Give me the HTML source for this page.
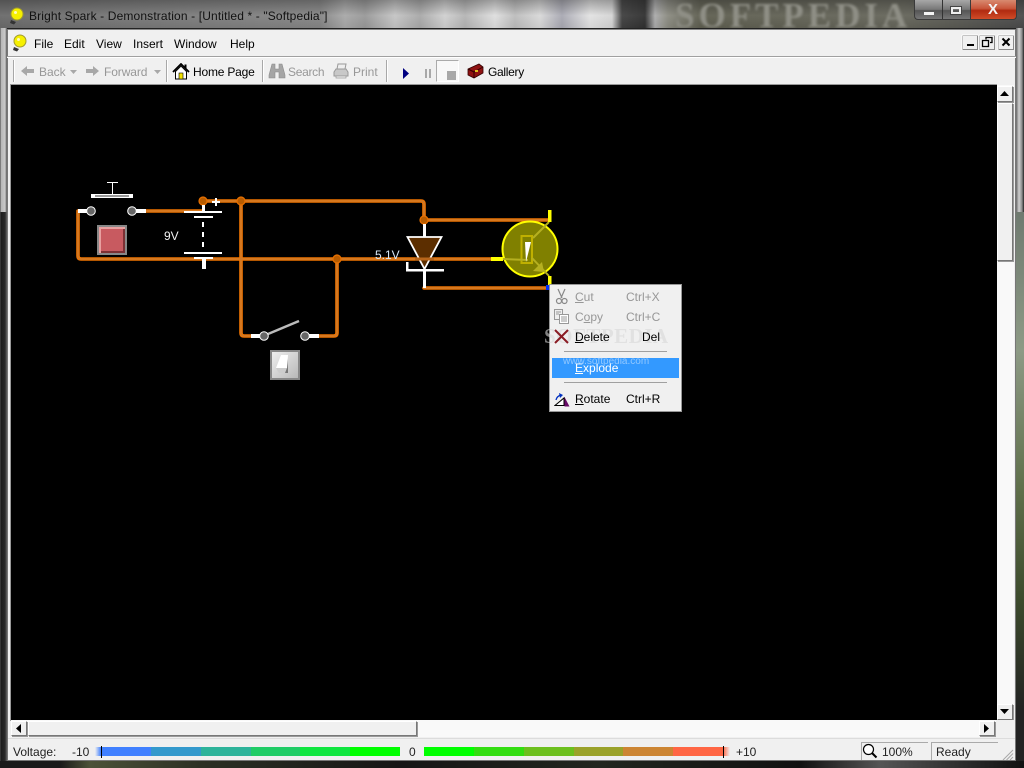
<!DOCTYPE html>
<html>
<head>
<meta charset="utf-8">
<title>Bright Spark</title>
<style>
html,body{margin:0;padding:0;width:1024px;height:768px;overflow:hidden;background:#222}
body{position:relative;font-family:"Liberation Sans",sans-serif;font-size:12px;color:#000}
.a{position:absolute}
.t{position:absolute;white-space:nowrap;line-height:14px;height:14px}
.d{color:#979797}
.btn{position:absolute;box-sizing:border-box;background:#f0f0f0;border:1px solid;border-color:#fff #777 #777 #fff;box-shadow:1px 1px 0 #999}
.sep{position:absolute;width:1px;background:#a8a8a8;border-right:1px solid #fff}
u{text-decoration:underline}
</style>
</head>
<body>
<!-- glass frame -->
<div class="a" style="left:0;top:0;width:1024px;height:28px;background:linear-gradient(90deg,#6a6a6a 0,#767676 120px,#858585 320px,#a8a8a8 345px,#989898 365px,#c4c4c4 395px,#a8a8a8 420px,#d0d0d0 445px,#b4b4b4 465px,#dedede 495px,#bcbcbc 515px,#d8d8d8 540px,#a8a8b2 562px,#e2e2e2 590px,#d4d4d4 612px,#404040 622px,#303030 645px,#ababab 655px,#8a8a80 668px,#5e5e50 700px,#65655a 900px,#4a4a4a 1024px)"></div>
<div class="a" style="left:0;top:0;width:1024px;height:28px;background:linear-gradient(180deg,rgba(40,40,40,.35),rgba(255,255,255,.05) 55%,rgba(0,0,0,.05))"></div>
<div class="a" style="left:0;top:0;width:1024px;height:28px;overflow:hidden"><div class="a" style="left:675px;top:-4px;font:bold 35px 'Liberation Serif',serif;color:#8f8f86;letter-spacing:4px;filter:blur(1.200px);white-space:nowrap">SOFTPEDIA</div></div>
<div class="a" style="left:0;top:28px;width:7px;height:184px;background:linear-gradient(90deg,#444 0,#b5b5b5 1px,#c8c8c8 5px,#555 7px)"></div>
<div class="a" style="left:0;top:212px;width:7px;height:556px;background:linear-gradient(90deg,#555 0,#1c1c1c 1px,#2a2a2a 5px,#666 7px)"></div>
<div class="a" style="left:1016px;top:28px;width:8px;height:184px;background:linear-gradient(90deg,#666,#d0d0d0 3px,#8a8a8a 6px,#222 8px)"></div>
<div class="a" style="left:1016px;top:212px;width:8px;height:556px;background:linear-gradient(180deg,#6f7a70 0,#8d9a85 25%,#5f6f4a 50%,#3c4a2c 70%,#222 90%)"></div>
<div class="a" style="left:0;top:761px;width:1024px;height:7px;background:linear-gradient(90deg,#1a1a1a 0,#1a1a1a 60px,#4c5238 90px,#2c3024 200px,#161616 400px,#22261f 600px,#111 800px,#555 880px,#333 950px,#111 1024px)"></div>

<!-- title -->
<svg class="a" style="left:8px;top:5px" width="20" height="20" viewBox="0 0 20 20"><circle cx="9" cy="9" r="6" fill="#f6f000" stroke="#a09a30"/><circle cx="7.500" cy="7.500" r="1.500" fill="#fffbc0"/><path d="M3 15l5 2-2 2.500-4-1.500z" fill="#333"/></svg>
<div class="t" style="left:29px;top:9px;color:#111;letter-spacing:.14px">Bright Spark - Demonstration - [Untitled * - "Softpedia"]</div>
<!-- caption buttons -->
<div class="a" style="left:914px;top:0;width:57px;height:20px;box-sizing:border-box;border:1px solid #3a3a3a;border-top:0;border-right:0;border-radius:0 0 0 4px;background:linear-gradient(180deg,#a8a8a8,#777 50%,#555 55%,#777)"></div>
<div class="a" style="left:942px;top:0;width:1px;height:19px;background:#333"></div>
<div class="a" style="left:970px;top:0;width:47px;height:20px;box-sizing:border-box;border:1px solid #3a3a3a;border-top:0;border-radius:0 0 4px 0;background:linear-gradient(180deg,#d88a70,#c8553a 45%,#b02a10 55%,#d04c28)"></div>
<div class="a" style="left:924px;top:12px;width:10px;height:3px;background:#f4f4f4"></div>
<div class="a" style="left:951px;top:7px;width:10px;height:7px;box-sizing:border-box;border:2px solid #eee;outline:1px solid #444"></div>
<div class="a" style="left:988px;top:1px;font:bold 15px 'Liberation Sans',sans-serif;color:#f4f4f4;line-height:18px">X</div>

<!-- client -->
<div class="a" style="left:7px;top:29px;width:1009px;height:732px;background:#f0f0f0;border-top:1px solid #888;box-sizing:border-box"></div>
<div class="a" style="left:7px;top:29px;width:1px;height:732px;background:#777"></div>
<div class="a" style="left:1015px;top:29px;width:1px;height:732px;background:#777"></div>
<div class="a" style="left:7px;top:56px;width:1009px;height:1px;background:#a0a0a0"></div>
<div class="a" style="left:7px;top:57px;width:1009px;height:1px;background:#fff"></div>

<!-- menu -->
<svg class="a" style="left:11px;top:34px" width="20" height="20" viewBox="0 0 20 20"><circle cx="9" cy="7" r="6" fill="#f6f000" stroke="#a09a30"/><circle cx="7.500" cy="5.500" r="1.500" fill="#fffbc0"/><path d="M3 13l5 2-2 2.500-4-1.500z" fill="#333"/></svg>
<div class="t" style="left:34px;top:37px">File</div>
<div class="t" style="left:64px;top:37px">Edit</div>
<div class="t" style="left:96px;top:37px">View</div>
<div class="t" style="left:133px;top:37px">Insert</div>
<div class="t" style="left:174px;top:37px">Window</div>
<div class="t" style="left:230px;top:37px">Help</div>
<!-- mdi buttons -->
<svg class="a" style="left:961px;top:34px" width="54" height="17" viewBox="0 0 54 17">
<rect x="1.500" y="1.500" width="15" height="14" fill="#f0f0f0" stroke="#888"/><path d="M1 1h16M1 1v15" stroke="#fff"/>
<rect x="6" y="10" width="7" height="2" fill="#000"/>
<rect x="18.500" y="1.500" width="15" height="14" fill="#f0f0f0" stroke="#888"/><path d="M18 1h16M18 1v15" stroke="#fff"/>
<path d="M25 5.500V3.500h6v5h-2M21.500 6.500h6v6h-6z" fill="none" stroke="#000" stroke-width="1.300"/>
<rect x="37.500" y="1.500" width="15" height="14" fill="#f0f0f0" stroke="#888"/><path d="M37 1h16M37 1v15" stroke="#fff"/>
<path d="M41.500 4.500l7 7M48.500 4.500l-7 7" stroke="#000" stroke-width="2"/>
</svg>

<!-- toolbar -->
<div class="sep" style="left:13px;top:60px;height:22px"></div>
<div class="sep" style="left:166px;top:60px;height:22px"></div>
<div class="sep" style="left:262px;top:60px;height:22px"></div>
<div class="sep" style="left:386px;top:60px;height:22px"></div>
<svg class="a" style="left:20px;top:64px" width="16" height="14"><path d="M1 7l6-5v3h7v4H7v3z" fill="#a8a8a8"/></svg>
<div class="t d" style="left:39px;top:65px">Back</div>
<svg class="a" style="left:70px;top:70px" width="8" height="5"><path d="M0 0h7L3.500 4z" fill="#a8a8a8"/></svg>
<svg class="a" style="left:85px;top:64px" width="16" height="14"><path d="M14 7L8 2v3H1v4h7v3z" fill="#a8a8a8"/></svg>
<div class="t d" style="left:104px;top:65px;letter-spacing:-.1px">Forward</div>
<svg class="a" style="left:154px;top:70px" width="8" height="5"><path d="M0 0h7L3.500 4z" fill="#a8a8a8"/></svg>
<svg class="a" style="left:172px;top:63px" width="18" height="17" viewBox="0 0 18 17"><path d="M1 9L9 1l8 8" fill="none" stroke="#000" stroke-width="1.800"/><path d="M3.500 8.500V16h11V8.500L9 3z" fill="#fff" stroke="#000"/><rect x="7" y="10" width="4" height="6" fill="#f2e200" stroke="#000" stroke-width=".6"/><rect x="12.500" y="1.500" width="2" height="4" fill="#000"/></svg>
<div class="t" style="left:193px;top:65px;letter-spacing:-.2px">Home Page</div>
<svg class="a" style="left:268px;top:63px" width="18" height="16" viewBox="0 0 18 16"><path d="M4 1h3v5h4V1h3l3 11v3h-6V9H7v6H1v-3z" fill="#a5a5a5" stroke="#8c8c8c" stroke-width=".6"/></svg>
<div class="t d" style="left:288px;top:65px;letter-spacing:-.3px">Search</div>
<svg class="a" style="left:333px;top:63px" width="16" height="16" viewBox="0 0 16 16"><path d="M5 1h8l-1 5H4z" fill="#eee" stroke="#999"/><path d="M3 6h10l2 3v4H1V9z" fill="#c8c8c8" stroke="#999"/><path d="M3 13h10v2H3z" fill="#eee" stroke="#999" stroke-width=".7"/></svg>
<div class="t d" style="left:353px;top:65px">Print</div>
<svg class="a" style="left:402px;top:68px" width="8" height="11"><path d="M1 0l6 5.500-6 5.500z" fill="#000080"/></svg>
<div class="a" style="left:425px;top:69px;width:2px;height:9px;background:#a8a8a8"></div>
<div class="a" style="left:429px;top:69px;width:2px;height:9px;background:#a8a8a8"></div>
<div class="a" style="left:436px;top:60px;width:23px;height:22px;box-sizing:border-box;border:1px solid #aaa;border-right-color:#fff;border-bottom-color:#fff;background:#f8f8f8"></div>
<div class="a" style="left:447px;top:71px;width:9px;height:9px;background:#a8a8a8"></div>
<svg class="a" style="left:467px;top:63px" width="17" height="16" viewBox="0 0 17 16"><path d="M1 6l11-5 4 3v6l-9 5-6-3z" fill="#8f1212" stroke="#300" stroke-width=".8"/><path d="M1 6l6 3 9-5M7 9v6" stroke="#300" fill="none"/><rect x="8" y="7" width="3" height="2" fill="#e0c020"/></svg>
<div class="t" style="left:488px;top:65px;letter-spacing:-.3px">Gallery</div>

<!-- canvas -->
<div class="a" style="left:10px;top:84px;width:987px;height:1px;background:#999"></div>
<div class="a" style="left:10px;top:84px;width:1px;height:637px;background:#999"></div>
<div class="a" style="left:11px;top:85px;width:986px;height:635px;background:#000"></div>

<!-- scrollbars -->
<div class="a" style="left:997px;top:85px;width:17px;height:635px;background:#f9f9f9"></div>
<div class="a" style="left:11px;top:720px;width:1003px;height:17px;background:#f9f9f9"></div>
<div class="btn" style="left:997px;top:86px;width:16px;height:16px"></div>
<svg class="a" style="left:1000px;top:91px" width="10" height="6"><path d="M4.500 0L9 5H0z" fill="#000"/></svg>
<div class="btn" style="left:997px;top:103px;width:16px;height:158px"></div>
<div class="btn" style="left:997px;top:704px;width:16px;height:16px"></div>
<svg class="a" style="left:1000px;top:709px" width="10" height="6"><path d="M0 0h9L4.500 5z" fill="#000"/></svg>
<div class="btn" style="left:11px;top:721px;width:16px;height:15px"></div>
<svg class="a" style="left:16px;top:724px" width="6" height="10"><path d="M5 0v9L0 4.500z" fill="#000"/></svg>
<div class="btn" style="left:28px;top:721px;width:389px;height:15px"></div>
<div class="btn" style="left:979px;top:721px;width:16px;height:15px"></div>
<svg class="a" style="left:984px;top:724px" width="6" height="10"><path d="M0 0v9l5-4.500z" fill="#000"/></svg>
<div class="a" style="left:996px;top:720px;width:18px;height:18px;background:#f0f0f0"></div>
<div class="a" style="left:8px;top:738px;width:1007px;height:1px;background:#dcdcdc"></div>

<!-- status bar -->
<div class="t" style="left:13px;top:745px;color:#222">Voltage:</div>
<div class="t" style="left:72px;top:745px;color:#222">-10</div>
<div class="a" style="left:95px;top:747px;width:6px;height:9px;background:linear-gradient(90deg,#f0f0f0,#4080ff)"></div>
<div class="a" style="left:101px;top:747px;width:50px;height:9px;background:#4080ff"></div>
<div class="a" style="left:151px;top:747px;width:50px;height:9px;background:#3399cc"></div>
<div class="a" style="left:201px;top:747px;width:50px;height:9px;background:#2db39a"></div>
<div class="a" style="left:251px;top:747px;width:49px;height:9px;background:#20cc66"></div>
<div class="a" style="left:300px;top:747px;width:50px;height:9px;background:#10e640"></div>
<div class="a" style="left:350px;top:747px;width:50px;height:9px;background:#00ff00"></div>
<div class="t" style="left:409px;top:745px;color:#222">0</div>
<div class="a" style="left:424px;top:747px;width:50px;height:9px;background:#00ff00"></div>
<div class="a" style="left:474px;top:747px;width:50px;height:9px;background:#33dd11"></div>
<div class="a" style="left:524px;top:747px;width:50px;height:9px;background:#6cbf1e"></div>
<div class="a" style="left:574px;top:747px;width:49px;height:9px;background:#9aa22a"></div>
<div class="a" style="left:623px;top:747px;width:50px;height:9px;background:#cc8533"></div>
<div class="a" style="left:673px;top:747px;width:50px;height:9px;background:#ff6644"></div>
<div class="a" style="left:723px;top:747px;width:7px;height:9px;background:linear-gradient(90deg,#ff6644,#f0f0f0)"></div>
<div class="a" style="left:101px;top:746px;width:1px;height:12px;background:#000"></div>
<div class="a" style="left:723px;top:746px;width:1px;height:12px;background:#000"></div>
<div class="t" style="left:736px;top:745px;color:#222">+10</div>
<div class="a" style="left:861px;top:742px;width:67px;height:19px;box-sizing:border-box;border-top:1px solid #aaa;border-left:1px solid #aaa"></div>
<div class="a" style="left:931px;top:742px;width:67px;height:19px;box-sizing:border-box;border-top:1px solid #aaa;border-left:1px solid #aaa"></div>
<svg class="a" style="left:862px;top:743px" width="16" height="16"><circle cx="6.500" cy="6.500" r="5" fill="#fff" stroke="#000" stroke-width="1.200"/><path d="M10 10l4.500 4.500" stroke="#000" stroke-width="2"/></svg>
<div class="t" style="left:882px;top:745px;color:#222">100%</div>
<div class="t" style="left:936px;top:745px;color:#222">Ready</div>
<svg class="a" style="left:1002px;top:749px" width="12" height="12"><path d="M11 1L1 11M11 4.500L4.500 11M11 8L8 11" stroke="#a8a8a8"/></svg>
<div class="a" style="left:7px;top:760px;width:1009px;height:1px;background:#777"></div>

<!-- circuit -->
<svg class="a" style="left:0;top:0" width="1024" height="768" viewBox="0 0 1024 768">
<g fill="none" stroke-linejoin="round" stroke-linecap="round">
<g stroke="#f07400" stroke-width="3.600">
<path d="M136 211H203M203 201H421q3 0 3 3V220M424 220H548M424 288H546M78 211V256q0 3 3 3H492M241 201V333q0 3 3 3H260M309 336H334q3 0 3-3V259"/>
</g>
<g stroke="#c87a30" stroke-width="1.300">
<path d="M136 211H203M203 201H421q3 0 3 3V220M424 220H548M424 288H546M78 211V256q0 3 3 3H492M241 201V333q0 3 3 3H260M309 336H334q3 0 3-3V259"/>
</g>
</g>
<g fill="#b85c00" stroke="#e87000" stroke-width="1.200">
<circle cx="203" cy="201" r="4"/><circle cx="241" cy="201" r="4"/><circle cx="337" cy="259" r="4"/><circle cx="424" cy="220" r="4"/>
</g>
<!-- pushbutton -->
<g fill="#fff">
<rect x="107" y="182" width="11" height="1"/><rect x="112" y="182" width="1" height="12"/>
<rect x="91" y="194" width="42" height="4"/>
<rect x="78" y="209" width="10" height="4"/><rect x="135" y="209" width="11" height="4"/>
</g>
<rect x="95" y="195" width="34" height="2" fill="#999"/>
<circle cx="91" cy="211" r="4.300" fill="#666" stroke="#fff"/>
<circle cx="132" cy="211" r="4.300" fill="#666" stroke="#fff"/>
<!-- battery -->
<g fill="#fff">
<rect x="202" y="205" width="3" height="7"/>
<rect x="184" y="211" width="38" height="2"/>
<rect x="194" y="216" width="19" height="2"/>
<rect x="202" y="222" width="2" height="5"/><rect x="202" y="232" width="2" height="5"/><rect x="202" y="242" width="2" height="5"/>
<rect x="184" y="252" width="38" height="2"/>
<rect x="194" y="257" width="19" height="2"/>
<rect x="202" y="259" width="4" height="10"/>
<rect x="212" y="201" width="8" height="2"/><rect x="215" y="198" width="2" height="8"/>
</g>
<!-- switch -->
<g fill="#fff"><rect x="251" y="334" width="10" height="4"/><rect x="309" y="334" width="10" height="4"/></g>
<path d="M268 334L299 321" stroke="#bbb" stroke-width="2.500"/>
<circle cx="264" cy="336" r="4.300" fill="#666" stroke="#fff"/>
<circle cx="305" cy="336" r="4.300" fill="#666" stroke="#fff"/>
<!-- zener -->
<path d="M407.500 237H441.500L424.500 269z" fill="#5c2e00" stroke="#fff" stroke-width="1.800"/>
<path d="M415 259H434" stroke="#b8651a" stroke-width="3"/>
<rect x="423" y="224" width="3" height="13" fill="#fff"/>
<rect x="423" y="270" width="3" height="18" fill="#fff"/>
<rect x="406" y="269" width="38" height="2.500" fill="#fff"/>
<rect x="406" y="262" width="2.500" height="8" fill="#fff"/>
<!-- transistor -->
<circle cx="530" cy="249" r="27.500" fill="#808000" stroke="#ffff00" stroke-width="2"/>
<rect x="491" y="257" width="12" height="4" fill="#ffff00"/>
<rect x="521.500" y="236" width="10.500" height="27" fill="none" stroke="#c0b000" stroke-width="2"/>
<path d="M503 259L528 260" stroke="#b5b020" stroke-width="2"/>
<path d="M533 238L549 222" stroke="#b5b020" stroke-width="2"/>
<path d="M532 258L549 276" stroke="#b5b020" stroke-width="2"/>
<path d="M533 271L542 262L544 272z" fill="#b5b020"/>
<path d="M525 242H531L526 262z" fill="#fff"/>
<rect x="548" y="210" width="3.500" height="12" fill="#ffff00"/>
<rect x="548" y="276" width="3.500" height="9" fill="#ffff00"/>
<rect x="546" y="285" width="3" height="5" fill="#0030ff"/>
<!-- labels -->
<text x="164" y="240" fill="#f2f2f2" font-family="Liberation Sans" font-size="12">9V</text>
<text x="375" y="259" fill="#d8e8f8" font-family="Liberation Sans" font-size="12">5.1V</text>
</svg>
<!-- control buttons -->
<div class="a" style="left:97px;top:225px;width:30px;height:30px;box-sizing:border-box;border:2px solid #888;background:#c85a60;box-shadow:inset 2px 2px 0 #e8a0a0,inset -2px -2px 0 #7c3034"></div>
<div class="a" style="left:270px;top:350px;width:30px;height:30px;box-sizing:border-box;border:2px solid #888;background:linear-gradient(135deg,#eee,#b8b8b8)"></div>
<svg class="a" style="left:270px;top:350px" width="30" height="30"><path d="M11 5H18L17 18H6z" fill="#fff"/><path d="M6 18H17V23H9z" fill="#ccc"/><path d="M18 9V23H15L17 18z" fill="#777"/></svg>

<!-- context menu -->
<div class="a" style="left:549px;top:284px;width:133px;height:128px;box-sizing:border-box;background:#f0f0f0;border:1px solid #979797;box-shadow:1px 1px 1px rgba(0,0,0,.4)"></div>
<div class="a" style="left:552px;top:358px;width:127px;height:20px;background:#3399ff"></div>
<div class="a" style="left:564px;top:351px;width:103px;height:1px;background:#a0a0a0"></div>
<div class="a" style="left:564px;top:382px;width:103px;height:1px;background:#a0a0a0"></div>
<div class="a" style="left:544px;top:324px;font:bold 21px 'Liberation Serif',serif;color:#d8d8d8;opacity:.6;letter-spacing:.5px;white-space:nowrap">SOFTPEDIA</div>
<div class="t" style="left:563px;top:355px;font-size:10px;color:#cfe6ff;opacity:.6">www.softpedia.com</div>
<svg class="a" style="left:554px;top:288px" width="16" height="17" viewBox="0 0 16 17"><path d="M4 1l4 9M11 1L7 10" stroke="#888" stroke-width="1.200"/><circle cx="5" cy="13" r="2.500" fill="none" stroke="#888" stroke-width="1.200"/><circle cx="10.500" cy="13" r="2.500" fill="none" stroke="#888" stroke-width="1.200"/></svg>
<svg class="a" style="left:553px;top:308px" width="17" height="17" viewBox="0 0 17 17"><path d="M1.500 1.500h8v10h-8z" fill="#eee" stroke="#999"/><path d="M6.500 6.500h9v9h-9z" fill="#fff" stroke="#999"/><path d="M3 4h5M3 6h3M8 9h6M8 11h6M8 13h6" stroke="#999"/></svg>
<svg class="a" style="left:554px;top:329px" width="15" height="15" viewBox="0 0 15 15"><path d="M1 1l13 13M14 1L1 14" stroke="#8a1c24" stroke-width="2"/></svg>
<svg class="a" style="left:554px;top:392px" width="17" height="15" viewBox="0 0 17 15"><path d="M1 13.500H10L10 6z" fill="#fff" stroke="#000"/><path d="M10.500 5l5 9.500h-5z" fill="#660a66"/><path d="M2 8q1-4 5-5" fill="none" stroke="#0030c0" stroke-width="1.300"/><path d="M5 1l4 2-3 3z" fill="#0030c0"/></svg>
<div class="t d" style="left:575px;top:290px"><u>C</u>ut</div>
<div class="t d" style="left:626px;top:290px">Ctrl+X</div>
<div class="t d" style="left:575px;top:310px">C<u>o</u>py</div>
<div class="t d" style="left:626px;top:310px">Ctrl+C</div>
<div class="t" style="left:575px;top:330px"><u>D</u>elete</div>
<div class="t" style="left:642px;top:330px">Del</div>
<div class="t" style="left:575px;top:361px;color:#fff"><u>E</u>xplode</div>
<div class="t" style="left:575px;top:392px"><u>R</u>otate</div>
<div class="t" style="left:626px;top:392px">Ctrl+R</div>
</body>
</html>
